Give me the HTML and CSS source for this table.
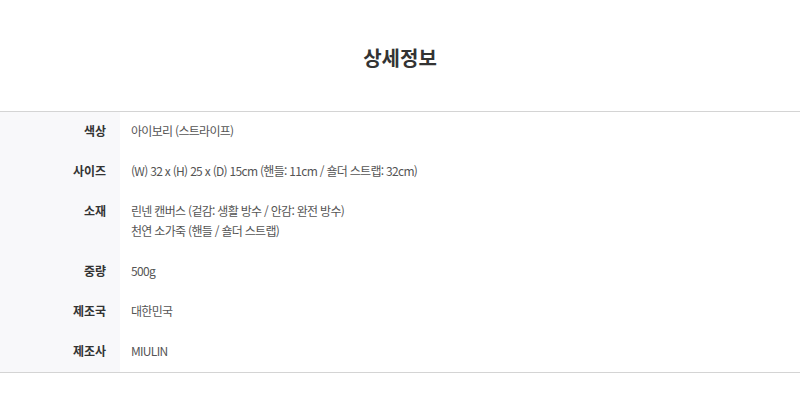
FILE: index.html
```html
<!DOCTYPE html>
<html lang="ko">
<head>
  <meta charset="UTF-8" />
  <meta name="viewport" content="width=device-width" />
  <title>상세정보</title>
  <link rel="stylesheet" href="styles.css">
</head>

<body>
  <div class="detail">
    <h2 class="detail-title">상세정보</h2>
    <table class="spec">
      <tbody>
        <tr>
          <th>색상</th>
          <td>아이보리 (스트라이프)</td>
        </tr>
        <tr>
          <th>사이즈</th>
          <td>(W) 32 x (H) 25 x (D) 15cm (핸들: 11cm / 숄더 스트랩: 32cm)</td>
        </tr>
        <tr>
          <th>소재</th>
          <td>린넨 캔버스 (겉감: 생활 방수 / 안감: 완전 방수)<br>천연 소가죽 (핸들 / 숄더 스트랩)</td>
        </tr>
        <tr>
          <th>중량</th>
          <td>500g</td>
        </tr>
        <tr>
          <th>제조국</th>
          <td>대한민국</td>
        </tr>
        <tr>
          <th>제조사</th>
          <td>MIULIN</td>
        </tr>
      </tbody>
    </table>
  </div>
</body>
</html>
```

FILE: styles.css
```css
body {
  margin: 0;
  font-family: "Noto Sans CJK KR", "Noto Sans", sans-serif;
  background: #fff;
  color: #555;
}
.detail {
  width: 100%;
}
.detail-title {
  margin: 0;
  padding: 48px 0 43px;
  font-size: 20px;
  line-height: 20px;
  font-weight: bold;
  color: #333;
  text-align: center;
}
.spec {
  width: 100%;
  border-collapse: collapse;
  border-top: 1px solid #d4d4d4;
  border-bottom: 1px solid #d4d4d4;
}
.spec th,
.spec td {
  padding: 9px 0 11px;
  font-size: 12px;
  line-height: 20px;
  vertical-align: top;
}
.spec th {
  width: 106px;
  padding-right: 14px;
  background: #f8f8fa;
  color: #333;
  font-weight: bold;
  text-align: right;
}
.spec td {
  padding-left: 11px;
  text-align: left;
  letter-spacing: -0.7px;
}
```
